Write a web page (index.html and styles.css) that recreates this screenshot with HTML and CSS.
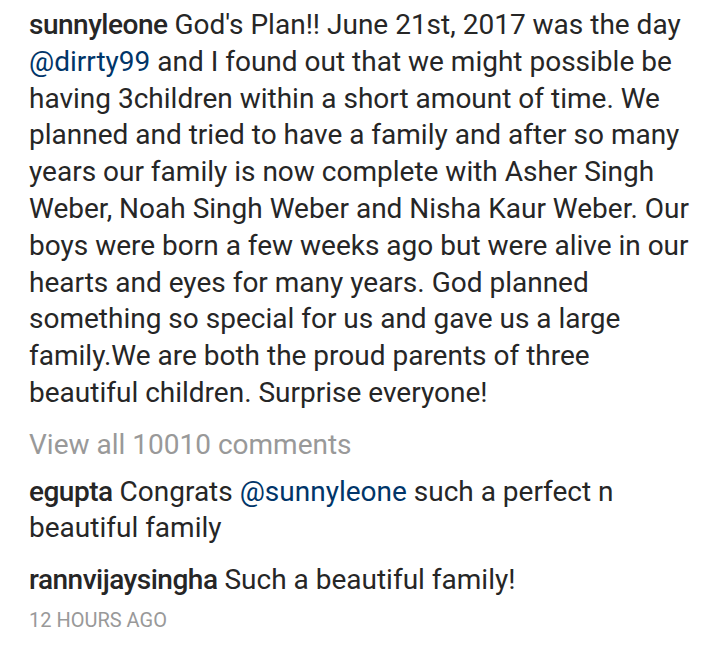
FILE: index.html
```html
<!DOCTYPE html>
<html lang="en">
<head>
<meta charset="utf-8">
<title>Post comments</title>
<link rel="stylesheet" href="styles.css">
</head>
<body>
<div class="post">
  <p class="caption"><span class="user">sunnyleone</span> God's Plan!! June 21st, 2017 was the day<br><span class="mention">@dirrty99</span> and I found out that we might possible be<br>having 3children within a short amount of time. We<br>planned and tried to have a family and after so many<br>years our family is now complete with Asher Singh<br>Weber, Noah Singh Weber and Nisha Kaur Weber. Our<br>boys were born a few weeks ago but were alive in our<br>hearts and eyes for many years. God planned<br>something so special for us and gave us a large<br>family.We are both the proud parents of three<br>beautiful children. Surprise everyone!</p>
  <p class="view-all">View all 10010 comments</p>
  <p class="comment first"><span class="user">egupta</span> Congrats <span class="mention">@sunnyleone</span> such a perfect n<br>beautiful family</p>
  <p class="comment second"><span class="user">rannvijaysingha</span> Such a beautiful family!</p>
  <p class="time">12 HOURS AGO</p>
</div>
</body>
</html>
```
FILE: styles.css
```css
html, body {
  margin: 0;
  padding: 0;
  background: #ffffff;
}
body {
  font-family: Roboto, "Liberation Sans", sans-serif;
  color: #262626;
  font-size: 28px;
  line-height: 36.8px;
}
.post {
  padding: 7px 0 0 29px;
}
.post p {
  margin: 0;
  white-space: nowrap;
}
.user {
  font-weight: 500;
  letter-spacing: -0.5px;
}
.mention {
  color: #003569;
}
.view-all {
  color: #999999;
  padding-top: 15px;
}
.comment.first {
  padding-top: 10px;
}
.comment.second {
  padding-top: 15px;
}
.time {
  color: #999999;
  font-size: 20px;
  line-height: 26px;
  padding-top: 8px;
}
```
